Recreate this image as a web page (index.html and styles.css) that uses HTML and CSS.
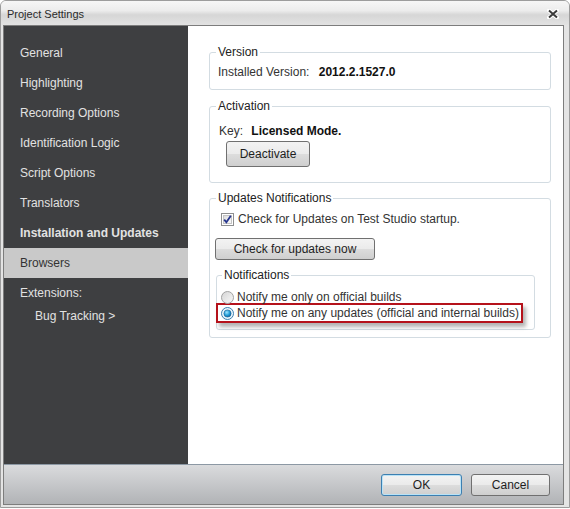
FILE: index.html
```html
<!DOCTYPE html>
<html lang="en">
<head>
  <meta charset="UTF-8" />
  <title>Project Settings</title>
  <link rel="stylesheet" href="styles.css">
</head>
<body>
  <div class="window">
    <div class="titlebar">
      <span class="title">Project Settings</span>
      <svg class="close" width="12" height="10" viewBox="0 0 12 10">
        <path d="M2 1.5 L10 8.5 M10 1.5 L2 8.5" stroke="#fff" stroke-width="4" stroke-linecap="round"/>
        <path d="M2 1.5 L10 8.5 M10 1.5 L2 8.5" stroke="#3a3a3a" stroke-width="2"/>
      </svg>
    </div>

    <div class="client">
      <div class="main">
        <nav class="sidebar">
          <div class="nav-item">General</div>
          <div class="nav-item">Highlighting</div>
          <div class="nav-item">Recording Options</div>
          <div class="nav-item">Identification Logic</div>
          <div class="nav-item">Script Options</div>
          <div class="nav-item">Translators</div>
          <div class="nav-item bold">Installation and Updates</div>
          <div class="nav-item selected">Browsers</div>
          <div class="nav-item">Extensions:</div>
          <div class="nav-sub">Bug Tracking &gt;</div>
        </nav>

        <div class="content">
          <fieldset class="group version">
            <legend>Version</legend>
            <div class="row">Installed Version: <b class="value">2012.2.1527.0</b></div>
          </fieldset>

          <fieldset class="group activation">
            <legend>Activation</legend>
            <div class="row key">Key: <b class="value">Licensed Mode.</b></div>
            <button class="btn deactivate">Deactivate</button>
          </fieldset>

          <fieldset class="group updates">
            <legend>Updates Notifications</legend>
            <label class="check-row">
              <svg class="checkbox" width="13" height="13" viewBox="0 0 13 13">
                <defs>
                  <linearGradient id="cbFill" x1="0" y1="0" x2="1" y2="1">
                    <stop offset="0" stop-color="#dcdcdc"/>
                    <stop offset="1" stop-color="#fbfbfb"/>
                  </linearGradient>
                </defs>
                <rect x="0.5" y="0.5" width="12" height="12" fill="#fff" stroke="#8e8f8f"/>
                <rect x="2.5" y="2.5" width="8" height="8" fill="url(#cbFill)" stroke="#c4c4c4"/>
                <path d="M3.2 6.6 L5.4 9.2 L9.8 2.8" fill="none" stroke="#26358e" stroke-width="1.8"/>
              </svg>
              Check for Updates on Test Studio startup.
            </label>
            <button class="btn check-now">Check for updates now</button>

            <fieldset class="group notifications">
              <legend>Notifications</legend>
              <label class="radio-row">
                <svg class="radio" width="13" height="13" viewBox="0 0 13 13">
                  <defs>
                    <linearGradient id="rbFill" x1="0" y1="0" x2="1" y2="1">
                      <stop offset="0" stop-color="#d4d4d4"/>
                      <stop offset="1" stop-color="#fafafa"/>
                    </linearGradient>
                  </defs>
                  <circle cx="6.5" cy="6.5" r="6" fill="url(#rbFill)" stroke="#a2a2a2"/>
                </svg>
                Notify me only on official builds
              </label>
              <label class="radio-row picked">
                <svg class="radio" width="13" height="13" viewBox="0 0 13 13">
                  <defs>
                    <radialGradient id="rbDot" cx="0.4" cy="0.35" r="0.7">
                      <stop offset="0" stop-color="#9ee4ff"/>
                      <stop offset="0.6" stop-color="#1e9ad6"/>
                      <stop offset="1" stop-color="#0b5e9a"/>
                    </radialGradient>
                  </defs>
                  <circle cx="6.5" cy="6.5" r="6" fill="#e8f4fb" stroke="#3b7fb0"/>
                  <circle cx="6.5" cy="6.5" r="3.6" fill="url(#rbDot)" stroke="#1a5f92" stroke-width="0.6"/>
                </svg>
                Notify me on any updates (official and internal builds)
              </label>
            </fieldset>
          </fieldset>
        </div>
      </div>

      <div class="footer">
        <button class="btn ok">OK</button>
        <button class="btn cancel">Cancel</button>
      </div>
    </div>
  </div>
</body>
</html>
```

FILE: styles.css
```css
body {
  margin: 0;
  background: #fff;
  font-family: "Liberation Sans", Arial, sans-serif;
  font-size: 12px;
  color: #1e1e1e;
}

/* outer dialog frame */
.window {
  box-sizing: border-box;
  width: 570px;
  height: 508px;
  border: 1px solid #9c9c9c;
  border-radius: 6px 6px 0 0;
  background: #e4e4e4;
  display: flex;
  flex-direction: column;
}

.titlebar {
  height: 24px;
  flex: none;
  display: flex;
  align-items: center;
  justify-content: space-between;
  padding: 0 10px 0 6px;
  border-radius: 5px 5px 0 0;
  background: linear-gradient(#f6f6f6 0%, #ececec 40%, #d6d6d6 58%, #e2e2e2 100%);
}
.title {
  font-size: 11px;
  color: #2a2a2a;
  padding-top: 1px;
}
.close {
  margin-top: 1px;
}

.client {
  box-sizing: border-box;
  width: 561px;
  margin-left: 2px;
  border: 1px solid #7d7d7d;
  display: flex;
  flex-direction: column;
}

.main {
  height: 438px;
  display: flex;
}

/* left navigation */
.sidebar {
  width: 184px;
  flex: none;
  background: #3e3f41;
  padding-top: 12px;
  box-sizing: border-box;
}
.nav-item {
  height: 30px;
  line-height: 30px;
  padding-left: 16px;
  color: #e2e2e2;
}
.nav-item.bold {
  font-weight: bold;
}
.nav-item.selected {
  background: #c9c9c9;
  color: #333;
}
.nav-sub {
  padding-left: 31px;
  line-height: 16px;
  color: #e2e2e2;
}

/* right settings panel */
.content {
  flex: 1;
  background: #fff;
  padding: 18px 12px 0 21px;
  display: flex;
  flex-direction: column;
  gap: 8px;
}

.group {
  margin: 0;
  border: 1px solid #d3dce2;
  border-radius: 3px;
  padding: 0 8px 9px 6px;
  min-width: 0;
}
.group legend {
  padding: 0 2px;
  line-height: 16px;
  color: #222;
}

.row {
  line-height: 16px;
  padding-left: 2px;
  color: #333;
}
.value {
  margin-left: 6px;
  color: #111;
}
.version .row {
  margin-top: 4px;
}
.activation .key {
  margin-top: 9px;
  padding-left: 3px;
}
.activation .value {
  margin-left: 5px;
}
.activation {
  padding-bottom: 15px;
}

.btn {
  font-family: inherit;
  font-size: 12px;
  color: #1e1e1e;
  border: 1px solid #707070;
  border-radius: 3px;
  background: linear-gradient(#f3f3f3 0%, #ebebeb 48%, #dcdcdc 52%, #cfcfcf 100%);
  padding: 0;
  cursor: pointer;
}
.deactivate {
  display: block;
  width: 84px;
  height: 26px;
  margin: 2px 0 0 10px;
}

.updates {
  margin-top: -1px;
  padding-bottom: 7px;
}
.check-row {
  display: flex;
  align-items: center;
  gap: 4px;
  line-height: 16px;
  margin: 5px 0 0 5px;
  color: #333;
}
.check-now {
  display: block;
  width: 160px;
  height: 22px;
  margin: 11px 0 0 -1px;
}

.notifications {
  margin-top: 7px;
  padding: 0 6px 6px 5px;
  width: 319px;
  box-sizing: border-box;
}
.radio-row {
  display: flex;
  align-items: center;
  gap: 3px;
  line-height: 15px;
  margin: 7px 0 0 -1px;
  color: #333;
}
.radio-row.picked {
  width: fit-content;
  margin: -2px 0 0 -6px;
  padding: 0 2px 0 3px;
  line-height: 16px;
  border: 2px solid #b5121b;
  box-shadow: 3px 4px 4px rgba(0, 0, 0, 0.3);
}

/* bottom button strip */
.footer {
  height: 39px;
  border-top: 1px solid #8c98a4;
  background: linear-gradient(#dadbdd, #b1b3b6);
  display: flex;
  align-items: center;
  justify-content: flex-end;
  gap: 9px;
  padding-right: 13px;
}
.footer .btn {
  height: 22px;
}
.ok {
  width: 81px;
  border-color: #3c7fb1;
  box-shadow: inset 0 0 0 1px #b9e2f6;
}
.cancel {
  width: 79px;
}
```
